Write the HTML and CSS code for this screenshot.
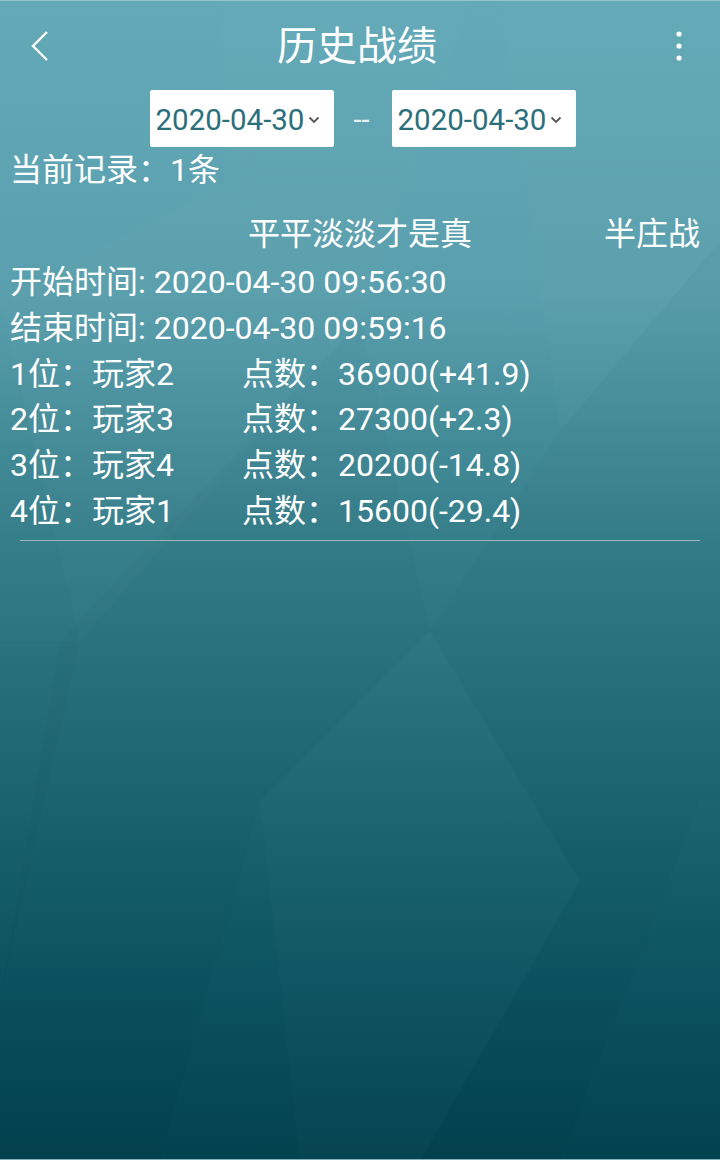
FILE: index.html
```html
<!DOCTYPE html>
<html lang="zh">
<head>
<meta charset="utf-8">
<title>历史战绩</title>
<link rel="stylesheet" href="styles.css">
</head>
<body>
<div class="screen">
  <header class="topbar">
    <button class="icon-btn back" aria-label="返回">
      <svg width="20" height="32" viewBox="0 0 20 32"><polyline points="16,2 2,16 16,30" fill="none" stroke="#fff" stroke-width="2.4"/></svg>
    </button>
    <h1 class="title">历史战绩</h1>
    <button class="icon-btn more" aria-label="更多">
      <svg width="8" height="32" viewBox="0 0 8 32"><circle cx="4" cy="4" r="2.6" fill="#fff"/><circle cx="4" cy="16" r="2.6" fill="#fff"/><circle cx="4" cy="28" r="2.6" fill="#fff"/></svg>
    </button>
  </header>

  <div class="date-row">
    <div class="date-box"><span class="date-text">2020-04-30</span><svg class="caret" width="12" height="8" viewBox="0 0 12 8"><polyline points="1.5,1.5 6,6 10.5,1.5" fill="none" stroke="#555" stroke-width="1.8"/></svg></div>
    <span class="sep">--</span>
    <div class="date-box"><span class="date-text">2020-04-30</span><svg class="caret" width="12" height="8" viewBox="0 0 12 8"><polyline points="1.5,1.5 6,6 10.5,1.5" fill="none" stroke="#555" stroke-width="1.8"/></svg></div>
  </div>

  <div class="count">当前记录：1条</div>

  <section class="record">
    <div class="record-head">
      <span class="room">平平淡淡才是真</span>
      <span class="mode">半庄战</span>
    </div>
    <div class="line">开始时间: 2020-04-30 09:56:30</div>
    <div class="line">结束时间: 2020-04-30 09:59:16</div>
    <div class="rank"><span class="who">1位：玩家2</span><span class="pts">点数：36900(+41.9)</span></div>
    <div class="rank"><span class="who">2位：玩家3</span><span class="pts">点数：27300(+2.3)</span></div>
    <div class="rank"><span class="who">3位：玩家4</span><span class="pts">点数：20200(-14.8)</span></div>
    <div class="rank"><span class="who">4位：玩家1</span><span class="pts">点数：15600(-29.4)</span></div>
    <div class="divider"></div>
  </section>
</div>
</body>
</html>
```

FILE: styles.css
```css
* { box-sizing: border-box; }
html, body { margin: 0; padding: 0; }
body {
  width: 720px;
  height: 1160px;
  font-family: Roboto, "Noto Sans CJK SC", sans-serif;
  color: #fff;
  overflow: hidden;
}
.screen {
  width: 720px;
  height: 1160px;
  border-top: 1px solid #93c3cb;
  border-bottom: 1px solid #7fb3bb;
  background:
    url("data:image/svg+xml;utf8,<svg xmlns='http://www.w3.org/2000/svg' width='720' height='1160'><g fill='white' fill-opacity='0.014'><polygon points='220,0 470,0 360,320 230,180'/><polygon points='500,0 720,0 720,240 560,430'/><polygon points='0,300 230,180 360,320 80,640'/><polygon points='260,800 430,630 580,880 420,1160 300,1160'/></g><g fill='black' fill-opacity='0.014'><polygon points='0,640 80,640 0,1000'/><polygon points='430,630 560,430 700,800 560,1160 420,1160 580,880'/><polygon points='60,640 360,320 430,630 260,800 160,1160 0,1160 0,1000'/><polygon points='560,430 720,240 720,800 700,800'/></g></svg>") no-repeat,
    linear-gradient(180deg, #63a9b7 0%, #5a9fad 25%, #347d89 47%, #1d6672 68%, #0c5260 85%, #03424f 100%);
}
.topbar {
  height: 89px;
  display: grid;
  grid-template-columns: 1fr auto 1fr;
  align-items: center;
  padding: 0 37px 0 31px;
}
.icon-btn {
  background: none;
  border: 0;
  padding: 0;
  display: flex;
  align-items: center;
}
.more { justify-self: end; }
.title {
  margin: 0;
  font-size: 40px;
  font-weight: normal;
  line-height: 1;
  padding-top: 2px;
}
.date-row {
  display: flex;
  align-items: center;
  justify-content: center;
  gap: 20px;
  padding-left: 5px;
}
.date-box {
  width: 184px;
  height: 57px;
  background: #fff;
  border-radius: 2px;
  display: flex;
  align-items: center;
  padding: 2px 0 0 6px;
  gap: 4px;
}
.date-text {
  font-size: 29.5px;
  color: #2b6f7b;
}
.sep {
  font-size: 29px;
  color: #e8f2f4;
  width: 18px;
  padding-top: 3px;
}
.count {
  font-size: 32px;
  padding-left: 10px;
  line-height: 46px;
}
.record {
  padding: 17px 20px 0 10px;
}
.record-head {
  display: flex;
  justify-content: space-between;
  font-size: 32px;
  line-height: 48px;
  margin-bottom: 2px;
}
.room { margin-left: 238px; }
.line, .rank {
  font-size: 32px;
  line-height: 45.8px;
}
.rank { display: flex; }
.who { width: 232px; }
.divider {
  height: 1px;
  background: #9bb8bd;
  margin: 5px 0 0 10px;
}
```
